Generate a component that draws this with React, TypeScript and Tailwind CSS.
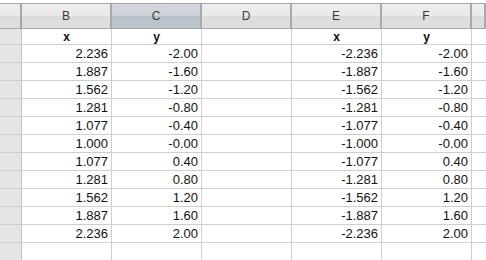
const cols = ['B', 'C', 'D', 'E', 'F', ''];

// x/y pairs for both halves of the sheet
const rows: [string, string, string, string][] = [
  ['2.236', '-2.00', '-2.236', '-2.00'],
  ['1.887', '-1.60', '-1.887', '-1.60'],
  ['1.562', '-1.20', '-1.562', '-1.20'],
  ['1.281', '-0.80', '-1.281', '-0.80'],
  ['1.077', '-0.40', '-1.077', '-0.40'],
  ['1.000', '-0.00', '-1.000', '-0.00'],
  ['1.077', '0.40', '-1.077', '0.40'],
  ['1.281', '0.80', '-1.281', '0.80'],
  ['1.562', '1.20', '-1.562', '1.20'],
  ['1.887', '1.60', '-1.887', '1.60'],
  ['2.236', '2.00', '-2.236', '2.00'],
  ['', '', '', ''],
];

const headBg =
  'bg-[linear-gradient(#ededed_0%,#e9e9e9_50%,#dcdcdc_50%,#dfdfdf_100%)]';
const selBg =
  'bg-[linear-gradient(#d3d8de_0%,#ccd2d9_50%,#b7c0c9_50%,#bcc4cc_100%)]';

const Cell = ({ v }: { v: string }) => (
  <div className="flex h-full w-[90px] shrink-0 items-center justify-end border-r border-[#cfcfcf] pr-[3px]">
    {v}
  </div>
);

const App = () => {
  return (
    <div
      className="w-[486px] h-[260px] overflow-hidden bg-white pt-[3px] text-[#111]"
      style={{ fontFamily: '"Liberation Sans", Arial, sans-serif' }}
    >
      {/* Column letters */}
      <div className="flex h-[26px] border-t border-b border-[#a8a8a8] text-[12px] text-[#3a3a3a]">
        <div className={`w-[22px] shrink-0 border-r-2 border-[#a6a6a6] ${headBg}`}></div>
        {cols.map((c, i) => (
          <div
            key={i}
            className={`${c ? 'w-[90px] shrink-0' : 'flex-1'} flex items-center justify-center border-r-2 border-[#a9a9a9] ${c === 'C' ? selBg : headBg}`}
          >
            {c}
          </div>
        ))}
      </div>

      {/* Header labels row */}
      <div className="flex h-[16px] border-b border-[#cfcfcf] text-[12px] font-bold">
        <div className="h-full w-[22px] shrink-0 border-r border-[#c4c4c4] bg-[#e5e5e5]"></div>
        {['x', 'y', '', 'x', 'y'].map((h, i) => (
          <div key={i} className="flex h-full w-[90px] shrink-0 items-center justify-center border-r border-[#cfcfcf]">
            {h}
          </div>
        ))}
        <div className="flex-1"></div>
      </div>

      {/* Data rows */}
      {rows.map((r, i) => (
        <div key={i} className="flex h-[18px] border-b border-[#cfcfcf] text-[13px]">
          <div className="h-full w-[22px] shrink-0 border-r border-[#c4c4c4] bg-[#e5e5e5]"></div>
          <Cell v={r[0]} />
          <Cell v={r[1]} />
          <Cell v="" />
          <Cell v={r[2]} />
          <Cell v={r[3]} />
          <div className="flex-1"></div>
        </div>
      ))}
    </div>
  );
};

export default App;
